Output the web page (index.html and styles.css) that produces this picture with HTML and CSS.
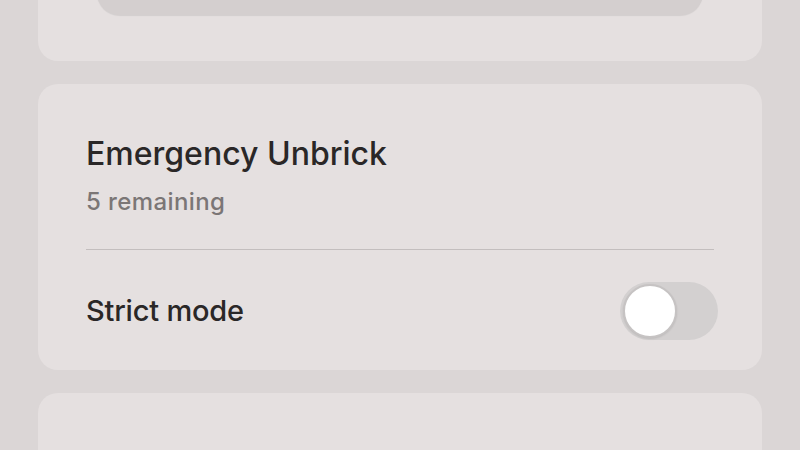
FILE: index.html
```html
<!DOCTYPE html>
<html>
<head>
<meta charset="utf-8">
<link rel="stylesheet" href="styles.css">
</head>
<body>
<div class="screen">
  <div class="card card-top">
    <div class="pill"></div>
  </div>
  <div class="card card-main">
    <div class="head">
      <div class="title">Emergency Unbrick</div>
      <div class="sub">5 remaining</div>
    </div>
    <div class="divider"></div>
    <div class="row">
      <div class="label">Strict mode</div>
      <div class="toggle"><div class="knob"></div></div>
    </div>
  </div>
  <div class="card card-bottom"></div>
</div>
</body>
</html>
```
FILE: styles.css
```css
html, body {
  margin: 0;
  padding: 0;
  background: #dbd6d6;
  overflow: hidden;
}
.screen {
  width: 800px;
  height: 450px;
  overflow: hidden;
  padding: 0 38px;
  box-sizing: border-box;
  display: flex;
  flex-direction: column;
  gap: 23px;
  font-family: "Inter", "Lato", sans-serif;
  color: #2a2727;
}
.card {
  background: #e5e0e0;
  border-radius: 20px;
  flex-shrink: 0;
}
.card-top {
  height: 61px;
  border-radius: 0 0 20px 20px;
  overflow: hidden;
  padding: 0 59px;
}
.pill {
  height: 45px;
  margin-top: -30px;
  border-radius: 30px;
  background: #d4cfcf;
  box-shadow: 0 1px 1px rgba(0,0,0,0.08);
}
.card-main {
  height: 286px;
  box-sizing: border-box;
  padding: 50px 48px 0 48px;
  display: flex;
  flex-direction: column;
}
.title {
  font-size: 32px;
  font-weight: 500;
  line-height: 40px;
}
.sub {
  margin-top: 13px;
  font-size: 24px;
  font-weight: 500;
  line-height: 30px;
  letter-spacing: 0.4px;
  color: #7b7676;
}
.divider {
  margin-top: 32px;
  height: 1px;
  background: #c3bebe;
}
.row {
  margin-top: 32px;
  display: flex;
  align-items: center;
  justify-content: space-between;
}
.label {
  font-size: 29px;
  font-weight: 500;
  line-height: 36px;
  letter-spacing: -0.2px;
}
.toggle {
  width: 98px;
  height: 58px;
  border-radius: 29px;
  background: #d3d0d0;
  margin-right: -4px;
  display: flex;
  align-items: center;
  padding-left: 3px;
  box-sizing: border-box;
}
.knob {
  width: 54px;
  height: 54px;
  border-radius: 50%;
  background: #ffffff;
  border: 2px solid #c6c3c3;
  box-sizing: border-box;
  box-shadow: 0 1px 2px rgba(0,0,0,0.1);
}
.card-bottom {
  height: 120px;
}
```
